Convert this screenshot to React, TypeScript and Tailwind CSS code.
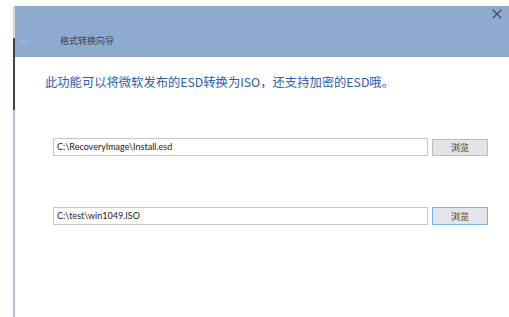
import { X, ArrowLeft } from "lucide-react";

export default function App() {
  return (
    <div
      className="w-[509px] h-[317px] bg-white flex overflow-hidden"
      style={{ fontFamily: '"Noto Sans CJK SC", sans-serif' }}
    >
      {/* 左侧留白 */}
      <div className="w-[13px]" />

      {/* 窗口左边框 */}
      <div className="w-[2px] flex flex-col">
        <div className="h-[6px] bg-white" />
        <div className="h-[32px] bg-[#d4d6da]" />
        <div className="h-[72px] bg-[#3d4350]" />
        <div className="flex-1 bg-[#aebcd4]" />
      </div>

      <div className="flex-1 flex flex-col">
        <div className="h-[6px] bg-white" />

        {/* 标题栏 */}
        <header className="h-[51px] bg-[#8eaacf] flex items-end pb-[8px] relative">
          <ArrowLeft className="ml-[3px] w-[15px] h-[15px] text-[#a9bcd8]" strokeWidth={1.2} />
          <span className="ml-[27px] mb-[2px] text-[9px] leading-[12px] text-[#3c4452]">格式转换向导</span>
          <X className="absolute right-[4px] top-[0px] w-[16px] h-[16px] text-[#454c58]" strokeWidth={1.6} />
        </header>

        {/* 内容 */}
        <main className="flex-1 flex flex-col pl-[30px]">
          <p className="mt-[17px] text-[12.3px] leading-[16px] text-[#2a5cb0]">
            此功能可以将微软发布的ESD转换为ISO，还支持加密的ESD哦。
          </p>

          <div className="mt-[48px] ml-[8px] flex items-center gap-[4px]">
            <div
              className="w-[375px] h-[18px] border border-[#c6c6c6] bg-white px-[3px] flex items-center text-[9px] text-[#222]"
              style={{ fontFamily: 'Lato, "Noto Sans CJK SC", sans-serif' }}
            >
              C:\RecoveryImage\Install.esd
            </div>
            <button className="w-[56px] h-[17px] border border-[#bdbdbd] bg-[#e4e4e4] text-[9px] leading-none text-[#333]">
              浏览
            </button>
          </div>

          <div className="mt-[51px] ml-[8px] flex items-center gap-[4px]">
            <div
              className="w-[375px] h-[18px] border border-[#c6c6c6] bg-white px-[3px] flex items-center text-[9px] text-[#222]"
              style={{ fontFamily: 'Lato, "Noto Sans CJK SC", sans-serif' }}
            >
              C:\test\win1049.ISO
            </div>
            <button className="w-[56px] h-[18px] border border-[#7eb4ea] bg-[#e2e6ea] text-[9px] leading-none text-[#333]">
              浏览
            </button>
          </div>
        </main>
      </div>
    </div>
  );
}
